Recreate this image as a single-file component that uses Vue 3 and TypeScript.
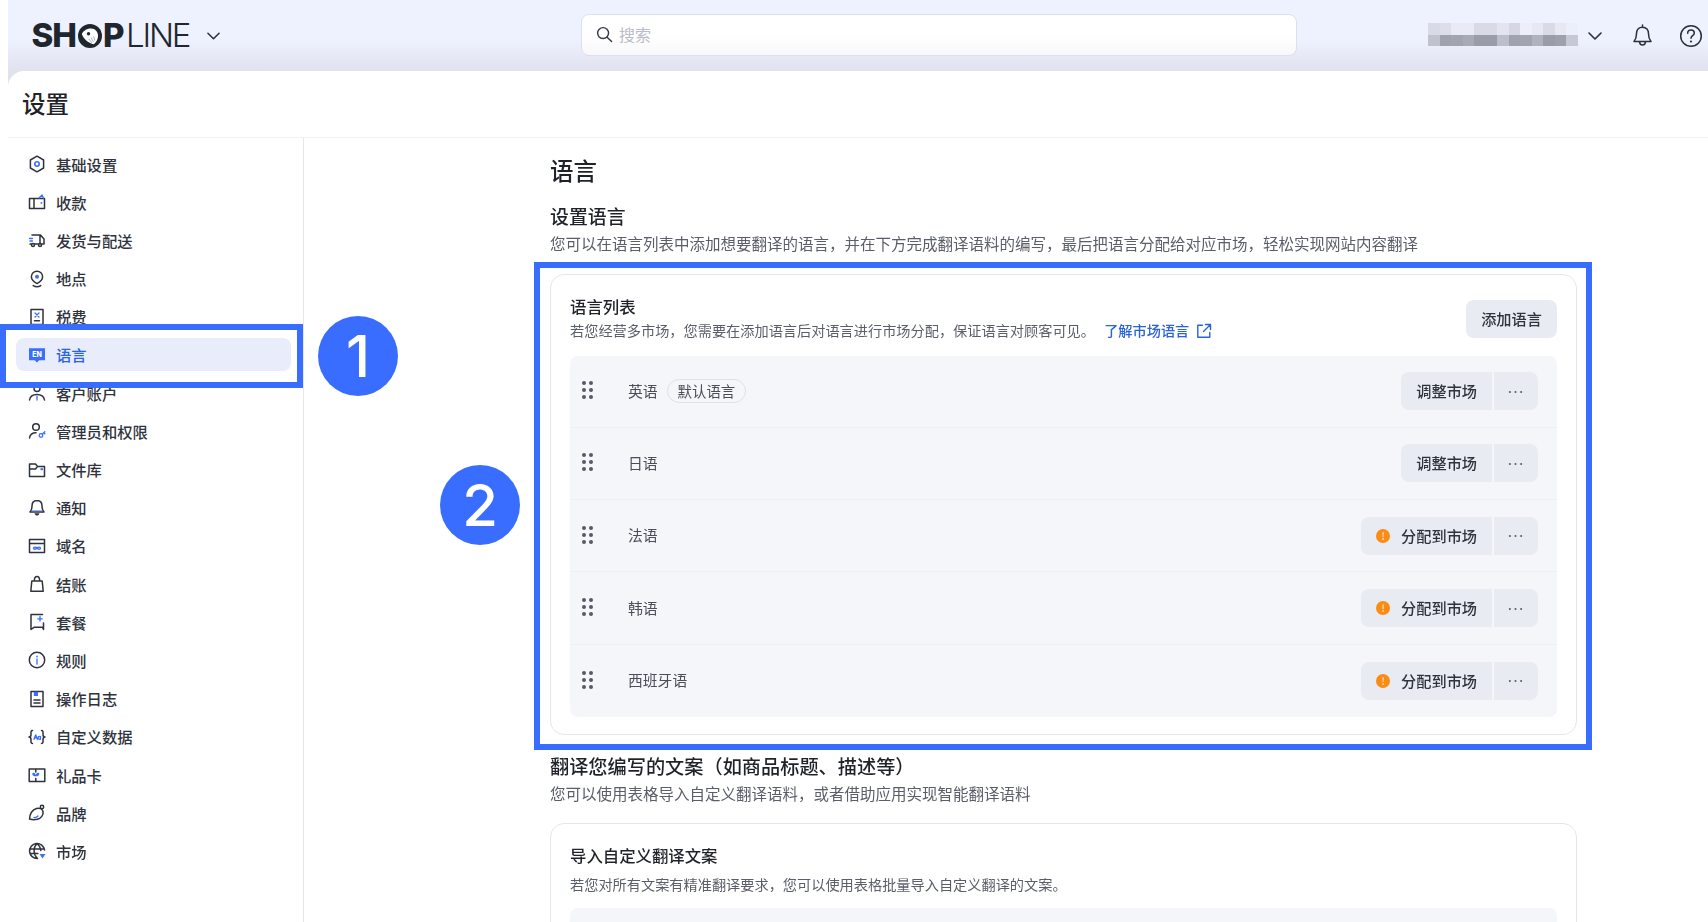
<script setup lang="ts">
interface NavItem { label: string; icon: string; active?: boolean }
const B = '#3a6ffb'
const s = (d: string) => `<path d="${d}" fill="none" stroke="#2f333d" stroke-width="1.5" stroke-linecap="round" stroke-linejoin="round"/>`
const a = (d: string) => `<path d="${d}" fill="none" stroke="${B}" stroke-width="1.3" stroke-linecap="round" stroke-linejoin="round"/>`
const f = (d: string) => `<path d="${d}" fill="${B}"/>`
const c = (x: number, y: number, r: number) => `<circle cx="${x}" cy="${y}" r="${r}" fill="none" stroke="#2f333d" stroke-width="1.5"/>`

const nav: NavItem[] = [
  { label: '基础设置', icon: s('M10 2.2l6.6 3.8v8L10 17.8 3.4 14V6z') + `<circle cx="10" cy="10" r="2.2" fill="none" stroke="${B}" stroke-width="1.6"/>` },
  { label: '收款', icon: s('M2.5 6.5h15v10h-15zM7 6.5v10') + f('M13.6 10.2h1.6v1.6h-1.6z') + a('M12 6l3-3 1.500 3') },
  { label: '发货与配送', icon: s('M5 5h8.500l3.500 4v5h-2M11 14H7.500M3 14h1.500M13 5v9') + c(6, 15, 1.5) + c(13, 15, 1.5) + a('M2.500 8.500h3M3 11h2.500') },
  { label: '地点', icon: s('M10 2.200a5.600 5.600 0 0 1 5.600 5.600c0 3.200-3 5.400-5.600 6.800-2.600-1.400-5.600-3.600-5.600-6.800A5.600 5.600 0 0 1 10 2.200zM6.200 16.600c2.400 1.500 5.200 1.500 7.600 0') + `<circle cx="10" cy="7.800" r="2" fill="${B}"/>` },
  { label: '税费', icon: s('M4 2.500h12v15H4zM7.500 13.800h5') + a('M8 6l4 4M12 6l-4 4') },
  { label: '语言', active: true, icon: `<path d="M2 3.200h16v12h-5.800L10 17.400l-2.200-2.200H2z" fill="${B}"/><text x="10" y="11.800" text-anchor="middle" font-size="7" font-weight="800" fill="#fff" font-family="Inter, sans-serif">EN</text>` },
  { label: '客户账户', icon: c(10, 5.5, 3) + s('M2.500 17c.6-3.600 3.500-5.500 7.500-5.500s6.900 1.900 7.500 5.500') + a('M10 13.500v3.500') },
  { label: '管理员和权限', icon: c(9, 6, 3.3) + s('M2.500 17c.5-3.500 3-5.200 6.500-5.200') + `<circle cx="14" cy="14.500" r="1.800" fill="none" stroke="${B}" stroke-width="1.300"/>` + a('M15.300 13.200l2.500-2.400M16.800 11.800l1 1') },
  { label: '文件库', icon: s('M2.500 16.500V4h6l2 2.500h7v10zM2.500 9h6l2-2.500') + f('M13.500 8.200h2.500v2h-2.500z') },
  { label: '通知', icon: s('M10 2.500c-3.300 0-5 2.500-5 5.500 0 3-.8 4.600-2 6h14c-1.200-1.400-2-3-2-6 0-3-1.700-5.500-5-5.500z') + `<path d="M7.500 15.200h5c-.4 1.500-1.400 2.300-2.500 2.300s-2.100-.8-2.500-2.300z" fill="#2f333d"/><path d="M5 12.300h10l1 1H4z" fill="${B}" opacity=".7"/>` },
  { label: '域名', icon: s('M2.500 3.500h15v13h-15zM2.500 7.500h15') + a('M10 12.200c-1-1.400-3.500-1.400-3.500 0s2.500 1.400 3.500 0c1-1.400 3.500-1.400 3.500 0s-2.500 1.400-3.500 0z') },
  { label: '结账', icon: s('M4.800 7h10.400l1 10.300H3.800zM7.300 7c0-2.800 1-4.500 2.700-4.500s2.700 1.700 2.700 4.500') },
  { label: '套餐', icon: s('M15.500 2.500H4v15l3-2.200h8.500l1 2.200V11') + a('M13 4.500v4.500M10.800 6.800h4.400') },
  { label: '规则', icon: c(10, 10, 7.7) + a('M10 9v5') + f('M9.200 5.700h1.600v1.600H9.200z') },
  { label: '操作日志', icon: s('M4 2.500h12v15H4zM7 11h6M7 14h6') + `<path d="M6.800 2.800h4.200v4.200H6.800z" fill="${B}"/>` },
  { label: '自定义数据', icon: s('M5.500 3.500c-2 0-1.500 2-1.500 4 0 1.500-1 2.500-2 2.500 1 0 2 1 2 2.500 0 2-.5 4 1.500 4M14.500 3.500c2 0 1.500 2 1.500 4 0 1.500 1 2.500 2 2.500-1 0-2 1-2 2.500 0 2 .5 4-1.500 4') + a('M7 12.300L8.700 7.800l1.700 4.500M7.600 10.800h2.200M13.500 9.300v3M13.500 10.800c0-2-2.400-2-2.400 0s2.400 2 2.400 0') },
  { label: '礼品卡', icon: s('M2.200 4h15.600v12.500H2.200zM8.800 4v3M8.800 13.500v3') + `<path d="M5.800 8c1.500-.6 2.400.4 3 2 .6-1.600 1.500-2.600 3-2 1.300.7 0 3.500-3 3.300-3 .2-4.300-2.600-3-3.300z" fill="${B}"/>` },
  { label: '品牌', icon: s('M2.500 16c.3-4 2.500-9 7-10.500 3-1 6 .5 6.500 3 .7 3.500-2 7-5.500 7.800-3 .7-6 .4-8-.3z') + c(15, 4, 1.7) + a('M7 14.500c1.500.2 3-.3 4-1.500') },
  { label: '市场', icon: s('M17.500 9a7.500 7.500 0 1 0-7 8.500M2.700 8h14.600M2.900 12.500h8M10 2.500c-4 4-4 11 .5 15M10 2.500c2.400 2 3.600 4.200 3.800 7') + f('M12.500 13h6l-3 4.500z') },
]

interface Row { name: string; tag?: string; assigned: boolean }
const rows: Row[] = [
  { name: '英语', tag: '默认语言', assigned: true },
  { name: '日语', assigned: true },
  { name: '法语', assigned: false },
  { name: '韩语', assigned: false },
  { name: '西班牙语', assigned: false },
]

const mosaicTop = ['#d8dae6', '#dcdeea', '#e8eaf6', '#e8eaf6', '#d8dae6', '#d8dae6', '#e2e4f0', '#d5d7e4', '#eceef9', '#e6e8f4', '#d8dae6', '#e6e8f2', '#eceef9']
const mosaicBottom = ['#c0c2ce', '#a0a2ae', '#a2a4b0', '#a8aab6', '#9a9ca8', '#9a9ca8', '#bcbecb', '#a0a2ae', '#a2a4b0', '#b0b2be', '#9a9ca8', '#9ea0ac', '#c6c8d4']
const mosaic = [...mosaicTop, ...mosaicBottom]
const dots = [0, 1, 2, 3, 4, 5]
</script>

<template>
  <div class="page">
    <div class="shell">
      <header class="topbar">
        <div class="brand">
          <span class="logo">
            <span class="logo-bold">SH</span>
            <svg class="logo-o" viewBox="0 0 24 24" aria-hidden="true">
              <circle cx="12" cy="12" r="12" fill="#20262e" />
              <path d="M3.800 10C5.500 6.300 9.500 4.500 13 4.500c4.200 0 7 3.300 7 7.500 0 3.200-1.600 6.200-4.200 8.300C10 18.800 5.500 15 3.800 10z" fill="#fff" />
              <circle cx="10.500" cy="9.800" r="1.700" fill="#20262e" />
              <path d="M11 15l3 4M13 13.500l2.500 4.500M15.500 12.500l1.500 4" stroke="#9aa0a8" stroke-width=".8" fill="none" />
            </svg>
            <span class="logo-bold">P</span><span class="logo-light">LINE</span>
          </span>
          <svg class="chev" viewBox="0 0 14 8"><path d="M1 1l6 6 6-6" /></svg>
        </div>
        <div class="search">
          <svg class="search-icon" viewBox="0 0 18 18"><circle cx="7.500" cy="7.500" r="5.800" /><path d="M11.800 11.800l4.700 4.700" /></svg>
          <span class="search-ph">搜索</span>
        </div>
        <div class="top-right">
          <div class="mosaic">
            <i v-for="(m, i) in mosaic" :key="i" :style="{ background: m }"></i>
          </div>
          <svg class="chev chev-user" viewBox="0 0 14 8"><path d="M1 1l6 6 6-6" /></svg>
          <svg class="bell" viewBox="0 0 20 24">
            <path d="M10 3.200c-3.900 0-6 2.900-6 6.500 0 3.900-1 6-2.500 7.700h17c-1.500-1.700-2.500-3.800-2.500-7.700 0-3.600-2.100-6.500-6-6.500zM10 1v2.200M7 17.800c.3 2.100 1.500 3.200 3 3.200s2.700-1.100 3-3.200" />
          </svg>
          <svg class="help" viewBox="0 0 24 24">
            <circle cx="12" cy="12" r="10.300" />
            <path d="M8.700 9.300c0-2 1.500-3.200 3.300-3.200s3.300 1.200 3.300 3c0 2.600-3.300 2.600-3.300 5.200" />
            <circle class="help-dot" cx="12" cy="17.500" r="1.100" />
          </svg>
        </div>
      </header>

      <div class="panel">
        <div class="titlebar"><h1>设置</h1></div>
        <div class="body">
          <nav class="sidebar">
            <a v-for="item in nav" :key="item.label" class="nav-item" :class="{ active: item.active }">
              <svg class="nav-icon" viewBox="0 0 20 20" v-html="item.icon"></svg>
              <span>{{ item.label }}</span>
            </a>
          </nav>

          <main class="content">
            <h2 class="page-title">语言</h2>
            <h3 class="section-title">设置语言</h3>
            <p class="section-sub">您可以在语言列表中添加想要翻译的语言，并在下方完成翻译语料的编写，最后把语言分配给对应市场，轻松实现网站内容翻译</p>

            <section class="card">
              <div class="card-head">
                <div>
                  <h4>语言列表</h4>
                  <p>
                    若您经营多市场，您需要在添加语言后对语言进行市场分配，保证语言对顾客可见。
                    <a class="link">了解市场语言
                      <svg class="ext" viewBox="0 0 16 16"><path d="M13.800 9.500v4.700H1.800V2.200h4.700M9.500 1.500h5v5M14.500 1.500L7.500 8.500" /></svg>
                    </a>
                  </p>
                </div>
                <button class="btn add">添加语言</button>
              </div>

              <div class="list">
                <div v-for="row in rows" :key="row.name" class="row">
                  <span class="handle"><i v-for="d in dots" :key="d"></i></span>
                  <span class="row-name">{{ row.name }}</span>
                  <span v-if="row.tag" class="tag">{{ row.tag }}</span>
                  <div class="group">
                    <button class="btn seg">
                      <span v-if="!row.assigned" class="warn">!</span>
                      {{ row.assigned ? '调整市场' : '分配到市场' }}
                    </button>
                    <button class="btn seg more">
                      <svg viewBox="0 0 16 4"><circle cx="2" cy="2" r="1.100" /><circle cx="8" cy="2" r="1.100" /><circle cx="14" cy="2" r="1.100" /></svg>
                    </button>
                  </div>
                </div>
              </div>
            </section>

            <h3 class="section-title second">翻译您编写的文案（如商品标题、描述等）</h3>
            <p class="section-sub">您可以使用表格导入自定义翻译语料，或者借助应用实现智能翻译语料</p>

            <section class="card card-two">
              <h4>导入自定义翻译文案</h4>
              <p class="card-two-sub">若您对所有文案有精准翻译要求，您可以使用表格批量导入自定义翻译的文案。</p>
              <div class="placeholder-box"></div>
            </section>
          </main>
        </div>
      </div>
    </div>

    <div class="mark mark-one"></div>
    <div class="badge badge-one">1</div>
    <div class="mark mark-two"></div>
    <div class="badge badge-two">2</div>
  </div>
</template>

<style>
html, body { margin: 0; background: #fff; }
</style>

<style scoped>
* { box-sizing: border-box; }
.page {
  position: relative;
  width: 1708px;
  height: 922px;
  overflow: hidden;
  padding-left: 8px;
  background: #fff;
  font-family: "Noto Sans CJK SC", "Noto Sans", sans-serif;
  color: #1f2329;
}
.shell {
  height: 100%;
  display: flex;
  flex-direction: column;
  background: linear-gradient(#eef1fe 0, #eef1fe 40px, #e0e3ee 71px, #e0e3ee 100%);
  filter: blur(.3px);
}
.topbar {
  height: 71px;
  flex: none;
  display: flex;
  align-items: center;
  padding-left: 23.500px;
}
.brand { width: 549.500px; display: flex; align-items: center; }
.logo {
  display: inline-flex;
  align-items: center;
  width: 158px;
  font-family: Inter, sans-serif;
  font-size: 33px;
  line-height: 1;
  color: #20262e;
  letter-spacing: -1px;
}
.logo-bold { font-weight: 800; }
.logo-light { font-weight: 300; letter-spacing: -2.200px; margin-left: 2.500px; }
.logo-o { width: 24px; height: 24px; margin: 0 1px 0 2px; flex: none; }
.chev { width: 13px; height: 8px; fill: none; stroke: #2a2f38; stroke-width: 1.600; stroke-linecap: round; stroke-linejoin: round; }
.brand .chev { margin-left: 17px; }
.search {
  width: 716px;
  height: 42px;
  margin-top: -1.500px;
  display: flex;
  align-items: center;
  gap: 6px;
  padding-left: 14px;
  background: linear-gradient(#fff 50%, #f8f8fb);
  border: 1.500px solid #dcdfec;
  border-radius: 8px;
}
.search-icon { width: 17px; height: 17px; fill: none; stroke: #343843; stroke-width: 1.500; stroke-linecap: round; }
.search-ph { font-size: 16px; color: #b9bcc9; margin-top: -2px; }
.top-right { margin-left: auto; padding-right: 5px; display: flex; align-items: center; }
.mosaic {
  width: 150px;
  height: 23px;
  display: grid;
  grid-template-columns: repeat(13, 1fr);
  grid-template-rows: repeat(2, 1fr);
  filter: blur(.4px);
  margin-top: -2px;
}
.chev-user { margin-left: 10px; width: 14px; }
.bell { width: 21px; height: 24px; margin-left: 30px; fill: none; stroke: #2a2f38; stroke-width: 1.500; stroke-linejoin: round; stroke-linecap: round; }
.help { width: 24px; height: 24px; margin-left: 26px; fill: none; stroke: #2a2f38; stroke-width: 1.500; stroke-linecap: round; }
.help-dot { fill: #2a2f38; stroke: none; }

.panel {
  flex: 1;
  min-height: 0;
  display: flex;
  flex-direction: column;
  background: #fff;
  border-top-left-radius: 16px;
}
.titlebar {
  height: 67px;
  flex: none;
  display: flex;
  align-items: center;
  padding-left: 14px;
  border-bottom: 1.500px solid #f0f1f4;
}
.titlebar h1 { margin: -2px 0 0; font-size: 23.500px; line-height: 30px; font-weight: 500; color: #1f2329; }
.body { flex: 1; display: flex; min-height: 0; }
.sidebar {
  width: 296px;
  flex: none;
  padding: 9px 12px 0 8px;
  border-right: 1.500px solid #e6e7ea;
}
.nav-item {
  height: 33px;
  margin-bottom: 5.200px;
  display: flex;
  align-items: center;
  gap: 9.500px;
  padding-left: 10.500px;
  border-radius: 8px;
  font-size: 15.300px;
  font-weight: 500;
  color: #2f333d;
}
.nav-item.active { background: #e9edfb; color: #2a62e8; }
.nav-icon { width: 20px; height: 20px; flex: none; margin-top: 1px; }

.content { flex: 1; min-width: 0; padding: 17px 0 0 246px; }
.page-title { margin: 0; font-size: 23.500px; line-height: 30px; font-weight: 500; color: #1f2329; }
.section-title { margin: 18px 0 0; font-size: 18.900px; line-height: 26px; font-weight: 500; color: #1f2329; }
.section-title.second { margin-top: 17.700px; font-size: 19.200px; }
.section-sub { margin: 3px 0 0; font-size: 15.500px; line-height: 22px; color: #5a5e68; white-space: nowrap; }
.card {
  width: 1027px;
  margin-top: 20px;
  padding: 20px 19px 17.500px 19px;
  background: #fff;
  border: 1.500px solid #e4e6ea;
  border-radius: 14px;
}
.card-two { margin-top: 19px; }
.card-head { display: flex; justify-content: space-between; align-items: flex-start; }
.card h4 { margin: 0; font-size: 16.400px; line-height: 22px; font-weight: 500; color: #1f2329; }
.card-head p { margin: 2px 0 0; font-size: 14.200px; line-height: 22px; color: #5a5e68; white-space: nowrap; }
.link { color: #2a62d8; font-weight: 500; margin-left: 6px; }
.ext { width: 16px; height: 16px; margin-left: 4px; vertical-align: -3px; fill: none; stroke: #2a62d8; stroke-width: 1.400; stroke-linecap: round; stroke-linejoin: round; }
.btn {
  height: 38px;
  border: none;
  background: #e9ebf3;
  font-family: inherit;
  font-size: 15.200px;
  font-weight: 500;
  color: #30333c;
  border-radius: 8px;
  padding: 0 15px 2px;
  display: inline-flex;
  align-items: center;
}
.add { margin-top: 5px; width: 91px; justify-content: center; padding: 0 0 2px; }
.list { margin-top: 14.500px; background: #f5f6fa; border-radius: 8px; }
.row {
  height: 72.300px;
  display: flex;
  align-items: center;
  padding: 0 19px 0 12px;
  border-bottom: 1px solid #eeeff4;
}
.row:last-child { border-bottom: none; }
.handle {
  width: 11px;
  height: 18px;
  display: grid;
  grid-template-columns: repeat(2, 4px);
  grid-template-rows: repeat(3, 4px);
  justify-content: space-between;
  align-content: space-between;
  margin-top: -2px;
}
.handle i { background: #555a66; border-radius: 50%; }
.row-name { margin-left: 35px; font-size: 14.800px; color: #4a4e58; margin-top: -2px; }
.tag {
  margin-left: 9px;
  height: 24px;
  padding: 0 10px 2px;
  display: inline-flex;
  align-items: center;
  font-size: 14.400px;
  color: #4a4e58;
  border: 1.500px solid #dfe1e6;
  border-radius: 12px;
}
.group { margin-left: auto; display: flex; gap: 2px; }
.seg { border-radius: 8px 0 0 8px; }
.seg.more { width: 44px; padding: 0; justify-content: center; border-radius: 0 8px 8px 0; }
.more svg { width: 15px; height: 4px; fill: #555a66; margin: 1px 2px 0 0; }
.warn {
  width: 14px;
  height: 14px;
  margin: 2px 11px 0 0;
  border-radius: 50%;
  background: #fa8c16;
  color: #ffd9a8;
  font-size: 10px;
  font-weight: 700;
  line-height: 14px;
  text-align: center;
}
.card-two-sub { margin: 7px 0 0; font-size: 14.200px; line-height: 22px; color: #5a5e68; }
.placeholder-box { margin-top: 13px; height: 120px; background: #f5f6fa; border-radius: 8px; }

.mark { position: absolute; border: 6px solid #396dff; pointer-events: none; }
.mark-one { left: 0; top: 324px; width: 303px; height: 64px; }
.mark-two { left: 534px; top: 262px; width: 1058px; height: 488px; }
.badge {
  position: absolute;
  width: 80px;
  height: 80px;
  border-radius: 50%;
  background: #396dff;
  color: #fff;
  font-family: Inter, sans-serif;
  font-weight: 500;
  font-size: 58px;
  line-height: 80px;
  text-align: center;
}
.badge-one { left: 318px; top: 316px; }
.badge-two { left: 440px; top: 465px; }
</style>
